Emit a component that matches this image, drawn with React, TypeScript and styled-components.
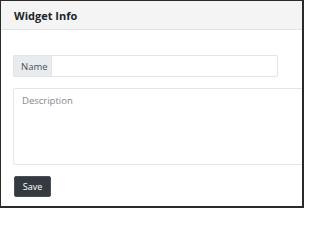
import React from 'react';
import styled, { createGlobalStyle } from 'styled-components';

const GlobalStyle = createGlobalStyle`
    html, body {
        margin: 0;
        padding: 0;
        background: #ffffff;
    }
    body {
        font-family: "Open Sans", "Noto Sans", Arial, sans-serif;
    }
`;

// Outer window frame with the dark edge
const Frame = styled.div`
    width: 304px;
    height: 208px;
    box-sizing: border-box;
    border: 1px solid #2a2a2a;
    border-right-width: 2px;
    border-bottom-width: 2px;
    background: #ffffff;
    overflow: hidden;
    display: flex;
    flex-direction: column;
`;

const Header = styled.div`
    height: 29px;
    flex-shrink: 0;
    box-sizing: border-box;
    padding-left: 13px;
    display: flex;
    align-items: center;
    background: #f4f4f4;
    border-bottom: 1px solid #e4e4e4;
`;

const Title = styled.span`
    font-size: 11px;
    font-weight: 700;
    color: #212529;
`;

const Body = styled.div`
    padding: 25px 0 0 12px;
    display: flex;
    flex-direction: column;
    gap: 11px;
`;

const InputGroup = styled.div`
    display: flex;
    width: 265px;
    height: 22px;
`;

const Addon = styled.span`
    width: 38px;
    box-sizing: border-box;
    display: flex;
    align-items: center;
    padding-left: 7px;
    font-size: 9.5px;
    color: #495057;
    background: #e9ecef;
    border: 1px solid #e1e4e8;
    border-right: none;
    border-radius: 2px 0 0 2px;
`;

const TextInput = styled.input`
    flex: 1;
    min-width: 0;
    box-sizing: border-box;
    border: 1px solid #e1e4e8;
    border-radius: 0 2px 2px 0;
    outline: none;
    padding: 0 6px;
    font-family: inherit;
    font-size: 9.5px;
`;

const TextArea = styled.textarea`
    width: 310px;
    height: 77px;
    box-sizing: border-box;
    border: 1px solid #e4e6e9;
    border-radius: 2px;
    padding: 5px 8px;
    resize: none;
    outline: none;
    font-family: inherit;
    font-size: 9.5px;
    color: #495057;

    &::placeholder {
        color: #7f878e;
    }
`;

const SaveButton = styled.button`
    align-self: flex-start;
    width: 37px;
    height: 21px;
    margin-left: 1px;
    box-sizing: border-box;
    padding: 0;
    background: #343a40;
    border: 1px solid #4a5057;
    border-radius: 2px;
    color: #ffffff;
    font-family: inherit;
    font-size: 9px;
    cursor: pointer;
`;

const App: React.FC = () => {
    return (
        <>
            <GlobalStyle />
            <Frame>
                <Header>
                    <Title>Widget Info</Title>
                </Header>
                <Body>
                    <InputGroup>
                        <Addon>Name</Addon>
                        <TextInput type="text" />
                    </InputGroup>
                    <TextArea placeholder="Description" />
                    <SaveButton>Save</SaveButton>
                </Body>
            </Frame>
        </>
    );
};

export default App;
